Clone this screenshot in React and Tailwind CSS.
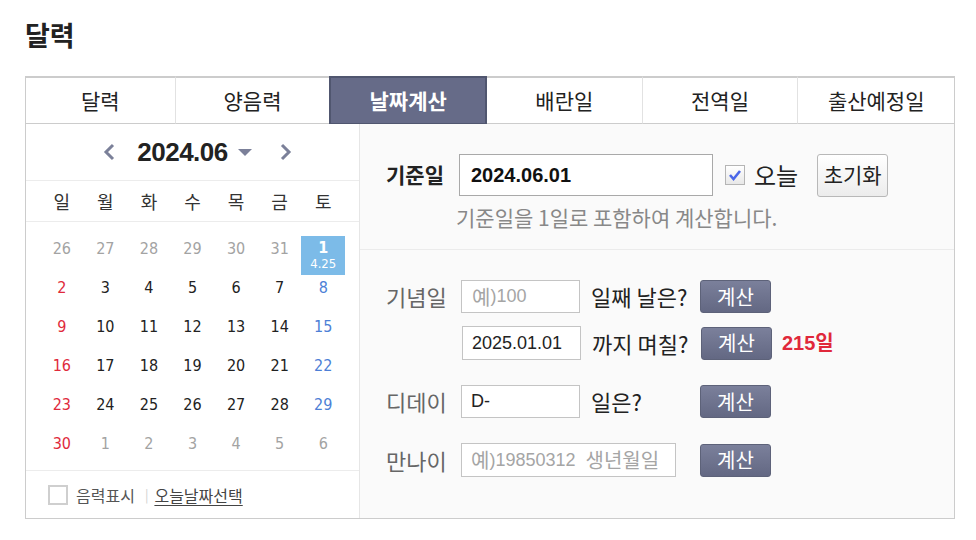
import React from "react";

const KR = { fontFamily: '"Noto Sans CJK KR", "Noto Sans", sans-serif' };
const AR = { fontFamily: '"Liberation Sans", Arial, "Noto Sans CJK KR", sans-serif' };
const NUM = { fontFamily: '"DejaVu Sans Condensed", "DejaVu Sans", sans-serif' };

const tabs = [
  { label: "달력", w: "w-[149px]" },
  { label: "양음력", w: "w-[155px]" },
  { label: "날짜계산", w: "w-[158px]", active: true },
  { label: "배란일", w: "w-[155px]" },
  { label: "전역일", w: "w-[156px]" },
  { label: "출산예정일", w: "w-[157px]" },
];

const weekdays = ["일", "월", "화", "수", "목", "금", "토"];

const weeks = [
  [26, 27, 28, 29, 30, 31, 1],
  [2, 3, 4, 5, 6, 7, 8],
  [9, 10, 11, 12, 13, 14, 15],
  [16, 17, 18, 19, 20, 21, 22],
  [23, 24, 25, 26, 27, 28, 29],
  [30, 1, 2, 3, 4, 5, 6],
];

function dayColor(wi, di, d) {
  const other = (wi === 0 && d > 7) || (wi === 5 && d < 20);
  if (wi === 5 && di === 0) return "text-[#e02a3c]";
  if (other) return "text-[#a3a3a3]";
  if (di === 0) return "text-[#e02a3c]";
  if (di === 6) return "text-[#4d7fd6]";
  return "text-[#222]";
}

function CalcButton() {
  return (
    <button
      className="w-[71px] h-[33px] rounded-[3px] border border-[#5d6279] bg-gradient-to-b from-[#7b809b] to-[#636883] text-white text-[20px] leading-none flex items-center justify-center"
      style={KR}
    >
      계산
    </button>
  );
}

export default function App() {
  return (
    <div className="w-[976px] h-[540px] bg-white px-[25px] pt-[15px]" style={KR}>
      <h1 className="text-[27px] font-bold leading-[40px] text-[#222]" style={KR}>
        달력
      </h1>
      <div className="mt-[21px] w-[930px] border-x border-b border-[#cccccc]">
        {/* tabs */}
        <div className="flex">
          {tabs.map((t, i) =>
            t.active ? (
              <div
                key={t.label}
                className={`${t.w} h-[48px] bg-[#666b88] border-2 border-b border-[#50566f] flex items-center justify-center text-white text-[21px] font-bold`}
              >
                {t.label}
              </div>
            ) : (
              <div
                key={t.label}
                className={`${t.w} h-[48px] border-t-2 border-b border-[#cccccc] flex items-center justify-center text-[21px] text-[#222] ${
                  i > 0 && !tabs[i - 1].active ? "border-l border-l-[#e2e2e2]" : ""
                }`}
              >
                {t.label}
              </div>
            )
          )}
        </div>

        <div className="flex h-[394px]">
          {/* left calendar */}
          <div className="w-[334px] border-r border-[#e6e6e6] bg-white flex flex-col">
            <div className="h-[57px] border-b border-[#ececec] flex items-center justify-center pl-[10px]">
              <svg width="14" height="18" viewBox="0 0 14 18" className="mr-[20px]">
                <polyline points="10,2 3,9 10,16" fill="none" stroke="#7b8099" strokeWidth="3" />
              </svg>
              <span className="text-[26px] font-bold text-[#222] tracking-[-0.5px]" style={AR}>
                2024.06
              </span>
              <svg width="14" height="8" viewBox="0 0 14 8" className="ml-[10px] mt-[2px]">
                <polygon points="0,0 14,0 7,7" fill="#7b8099" />
              </svg>
              <svg width="14" height="18" viewBox="0 0 14 18" className="ml-[26px]">
                <polyline points="4,2 11,9 4,16" fill="none" stroke="#7b8099" strokeWidth="3" />
              </svg>
            </div>
            <div className="h-[41px] border-b border-[#ececec] grid grid-cols-7 px-[14px] items-center">
              {weekdays.map((w) => (
                <div key={w} className="text-center text-[18px] text-[#333]">
                  {w}
                </div>
              ))}
            </div>
            <div className="px-[14px] pt-[14px]">
              {weeks.map((wk, wi) => (
                <div key={wi} className="grid grid-cols-7 h-[39px]">
                  {wk.map((d, di) =>
                    wi === 0 && di === 6 ? (
                      <div key={di} className="bg-[#7cbbe8] text-white flex flex-col items-center" style={NUM}>
                        <span className="text-[16px] font-bold leading-[16px] mt-[4px]">1</span>
                        <span className="text-[13px] leading-[14px] mt-[1px]">4.25</span>
                      </div>
                    ) : (
                      <div
                        key={di}
                        className={`text-center text-[16px] leading-[18px] pt-[4px] ${dayColor(wi, di, d)}`}
                        style={NUM}
                      >
                        {d}
                      </div>
                    )
                  )}
                </div>
              ))}
            </div>
            <div className="flex-1 border-t border-[#ececec] flex items-center pl-[22px] text-[16px]">
              <span className="w-[20px] h-[20px] border-2 border-[#cfcfcf] bg-white mr-[8px]" />
              <span className="text-[#555]">음력표시</span>
              <span className="ml-[10px] mr-[6px] text-[#d0d0d0] text-[13px]">|</span>
              <span className="text-[#444] underline underline-offset-[3px]">오늘날짜선택</span>
            </div>
          </div>

          {/* right */}
          <div className="flex-1 bg-[#fafafa] flex flex-col">
            <div className="h-[126px] border-b border-[#ebebeb] pl-[26px] pt-[30px]">
              <div className="flex items-center h-[42px]">
                <span className="w-[73px] text-[21px] font-bold text-[#222]">기준일</span>
                <div
                  className="w-[254px] h-[42px] border border-[#a9a9a9] bg-white flex items-center pl-[11px] text-[20px] font-bold text-[#111]"
                  style={AR}
                >
                  2024.06.01
                </div>
                <span className="ml-[12px] w-[20px] h-[20px] border border-[#b5b5b5] bg-gradient-to-b from-white to-[#e8e8e8] flex items-center justify-center">
                  <svg width="14" height="12" viewBox="0 0 14 12">
                    <polyline points="2,6 5.5,10 12,2" fill="none" stroke="#4a66e8" strokeWidth="2.6" />
                  </svg>
                </span>
                <span className="ml-[9px] text-[24px] text-[#222]">오늘</span>
                <button className="ml-[19px] w-[71px] h-[43px] border border-[#b8b8b8] rounded-[3px] bg-gradient-to-b from-white to-[#ececec] text-[21px] text-[#222] flex items-center justify-center" style={KR}>
                  초기화
                </button>
              </div>
              <div className="ml-[70px] mt-[7px] text-[21px] leading-[28px] text-[#888]">
                기준일을 1일로 포함하여 계산합니다.
              </div>
            </div>

            <div className="pl-[26px] pt-[30px] flex flex-col">
              <div className="flex items-center h-[33px]">
                <div className="w-[314px] flex items-center">
                  <span className="w-[75px] text-[22px] text-[#666]">기념일</span>
                  <div className="w-[119px] h-[33px] border border-[#c4c4c4] bg-white flex items-center pl-[10px] text-[18px] text-[#a5a5a5]" style={AR}>
                    <span className="text-[20px]" style={KR}>예</span>)100
                  </div>
                  <span className="ml-[11px] text-[22px] text-[#222]">일째 날은?</span>
                </div>
                <CalcButton />
              </div>
              <div className="flex items-center h-[34px] mt-[13px]">
                <div className="w-[315px] flex items-center">
                  <span className="w-[76px]" />
                  <div className="w-[119px] h-[34px] border border-[#c4c4c4] bg-white flex items-center pl-[9px] text-[18px] text-[#222]" style={AR}>
                    2025.01.01
                  </div>
                  <span className="ml-[11px] text-[22px] text-[#222]">까지 며칠?</span>
                </div>
                <CalcButton />
                <span className="ml-[10px] text-[20px] font-bold text-[#e0283a]" style={AR}>
                  215일
                </span>
              </div>
              <div className="flex items-center h-[33px] mt-[25px]">
                <div className="w-[314px] flex items-center">
                  <span className="w-[75px] text-[22px] text-[#666]">디데이</span>
                  <div className="w-[119px] h-[33px] border border-[#c4c4c4] bg-white flex items-center pl-[9px] text-[18px] text-[#222]" style={AR}>
                    D-
                  </div>
                  <span className="ml-[11px] text-[22px] text-[#222]">일은?</span>
                </div>
                <CalcButton />
              </div>
              <div className="flex items-center h-[34px] mt-[25px]">
                <div className="w-[314px] flex items-center">
                  <span className="w-[75px] text-[22px] text-[#666]">만나이</span>
                  <div className="w-[215px] h-[34px] border border-[#c4c4c4] bg-white flex items-center pl-[9px] text-[18px] text-[#a5a5a5] whitespace-nowrap" style={AR}>
                    <span className="text-[20px]" style={KR}>예</span>)19850312&nbsp;&nbsp;
                    <span className="text-[20px]" style={KR}>생년월일</span>
                  </div>
                </div>
                <CalcButton />
              </div>
            </div>
          </div>
        </div>
      </div>
    </div>
  );
}
